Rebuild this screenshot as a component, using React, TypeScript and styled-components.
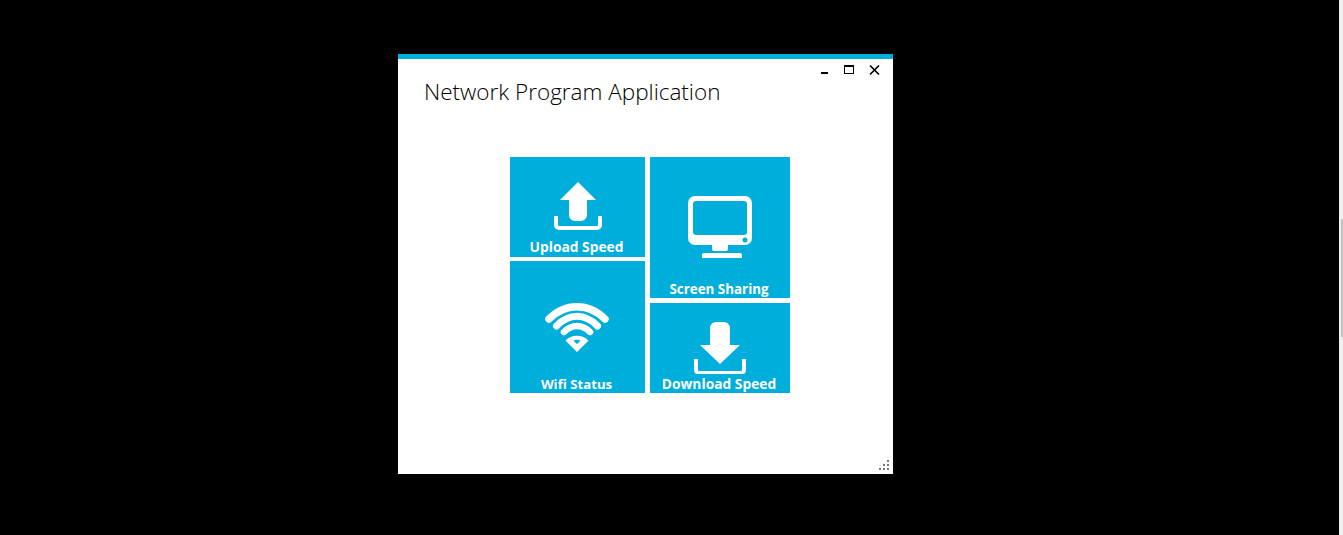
import React from "react";
import styled, { createGlobalStyle } from "styled-components";

const Global = createGlobalStyle`
  html, body { margin: 0; padding: 0; background: #000; }
  body { width: 1343px; height: 535px; overflow: hidden; }
`;

const Screen = styled.div`
  width: 1343px;
  height: 535px;
  background: #000;
  display: flex;
  padding: 54px 0 0 398px;
  box-sizing: border-box;
  position: relative;
`;

const Window = styled.div`
  width: 495px;
  height: 420px;
  background: #fff;
  border-top: 5px solid #00aedb;
  box-sizing: border-box;
  position: relative;
  display: flex;
  flex-direction: column;
  font-family: "Open Sans", "Noto Sans", sans-serif;
`;

const Controls = styled.div`
  position: absolute;
  top: 0;
  right: 6px;
  display: flex;
`;

const ControlButton = styled.div`
  width: 25px;
  height: 22px;
  display: flex;
  align-items: center;
  justify-content: center;
`;

const Title = styled.h1`
  margin: 17px 0 0 26px;
  font-family: "Open Sans", "Noto Sans", sans-serif;
  font-weight: 300;
  font-size: 22.5px;
  line-height: 32px;
  color: #000;
`;

const TileGrid = styled.div`
  margin: 49px 0 0 112px;
  display: grid;
  grid-template-columns: 135px 140px;
  column-gap: 5px;
`;

const Column = styled.div<{ $gap: number }>`
  display: flex;
  flex-direction: column;
  gap: ${(p) => p.$gap}px;
`;

const Tile = styled.div<{ $height: number }>`
  height: ${(p) => p.$height}px;
  background: #00aedb;
  display: flex;
  flex-direction: column;
  align-items: center;
  color: #fff;
`;

const IconSlot = styled.div<{ $top: number }>`
  margin-top: ${(p) => p.$top}px;
  display: flex;
  flex: 1;
  justify-content: center;
  align-items: flex-start;
`;

const TileLabel = styled.div<{ $lift?: number; $size?: number }>`
  font-size: ${(p) => p.$size ?? 13.8}px;
  font-weight: 700;
  line-height: 18px;
  height: 18px;
  margin-bottom: ${(p) => p.$lift ?? 0}px;
  padding-right: 2px;
  white-space: nowrap;
  font-family: "Open Sans", "Noto Sans", sans-serif;
`;

const Grip = styled.svg`
  position: absolute;
  right: 4px;
  bottom: 4px;
`;

const ScrollTrack = styled.div`
  position: absolute;
  right: 0;
  top: 0;
  width: 4px;
  height: 100%;
  background: #f1f1f1;
`;

const ScrollThumb = styled.div`
  position: absolute;
  right: 0;
  top: 219px;
  width: 2px;
  height: 118px;
  background: #c1c1c1;
`;

const UploadIcon = () => (
  <svg width="48" height="48" viewBox="0 0 48 48" fill="#fff">
    <path d="M24 0 L42 18 H33 V33 a6 6 0 0 1 -6 6 H21 a6 6 0 0 1 -6 -6 V18 H6 Z" />
    <path d="M2 34 V43 a3 3 0 0 0 3 3 H43 a3 3 0 0 0 3 -3 V34" fill="none" stroke="#fff" strokeWidth="4" />
  </svg>
);

const DownloadIcon = () => (
  <svg width="52" height="52" viewBox="0 0 52 52" fill="#fff">
    <path d="M16 6 a6 6 0 0 1 6 -6 H30 a6 6 0 0 1 6 6 V23 H46 L26 42 L6 23 H16 Z" />
    <path d="M2 37 V48 a3 3 0 0 0 3 3 H47 a3 3 0 0 0 3 -3 V37" fill="none" stroke="#fff" strokeWidth="4" />
  </svg>
);

const MonitorIcon = () => (
  <svg width="64" height="62" viewBox="0 0 64 62" fill="#fff">
    <path fillRule="evenodd" d="M7 0 H57 a7 7 0 0 1 7 7 V42 a7 7 0 0 1 -7 7 H7 a7 7 0 0 1 -7 -7 V7 a7 7 0 0 1 7 -7 Z M8 5 a3 3 0 0 0 -3 3 V36 a3 3 0 0 0 3 3 H56 a3 3 0 0 0 3 -3 V8 a3 3 0 0 0 -3 -3 Z" />
    <circle cx="57" cy="44" r="2.5" fill="#00aedb" />
    <path d="M24 48 H40 V53 a2 2 0 0 1 -2 2 H26 a2 2 0 0 1 -2 -2 Z" />
    <path d="M14 62 V59 a2 2 0 0 1 2 -2 H52 a2 2 0 0 1 2 2 V62 Z" />
  </svg>
);

const WifiIcon = () => (
  <svg width="66" height="50" viewBox="0 0 66 50" fill="none" stroke="#fff" strokeLinecap="round">
    <path d="M4 17 C20 0.5 44 0.5 60 17" strokeWidth="7.5" />
    <path d="M11.5 24 C24 11 40 11 52.5 24" strokeWidth="7" />
    <path d="M19 30 C27 22 37 22 45 30" strokeWidth="6.5" />
    <path
      d="M32 50 L20.5 38.5 C26 32 38 32 43.5 38.5 Z M32 42 L28.5 38.8 C30.5 37.5 33.5 37.5 35.5 38.8 Z"
      fill="#fff"
      stroke="none"
      fillRule="evenodd"
    />
  </svg>
);

export default function App() {
  return (
    <>
      <Global />
      <Screen>
        <Window>
          <Controls>
            <ControlButton>
              <svg width="8" height="8" viewBox="0 0 8 8"><rect x="0" y="6" width="7" height="2" fill="#000" /></svg>
            </ControlButton>
            <ControlButton>
              <svg width="11" height="10" viewBox="0 0 11 10"><rect x="0.5" y="0.5" width="9" height="8" fill="none" stroke="#000" /><rect x="0.5" y="0" width="9" height="2" fill="#000" /></svg>
            </ControlButton>
            <ControlButton>
              <svg width="11" height="10" viewBox="0 0 11 10"><path d="M1 0.5 L10 9.5 M10 0.5 L1 9.5" stroke="#000" strokeWidth="1.6" /></svg>
            </ControlButton>
          </Controls>
          <Title>Network Program Application</Title>
          <TileGrid>
            <Column $gap={4}>
              <Tile $height={100}>
                <IconSlot $top={25}><UploadIcon /></IconSlot>
                <TileLabel $lift={1}>Upload Speed</TileLabel>
              </Tile>
              <Tile $height={132}>
                <IconSlot $top={41}><WifiIcon /></IconSlot>
                <TileLabel $size={13.2}>Wifi Status</TileLabel>
              </Tile>
            </Column>
            <Column $gap={5}>
              <Tile $height={141}>
                <IconSlot $top={39}><MonitorIcon /></IconSlot>
                <TileLabel $size={13.4}>Screen Sharing</TileLabel>
              </Tile>
              <Tile $height={90}>
                <IconSlot $top={19}><DownloadIcon /></IconSlot>
                <TileLabel>Download Speed</TileLabel>
              </Tile>
            </Column>
          </TileGrid>
          <Grip width="10" height="10" viewBox="0 0 10 10" fill="#777">
            <rect x="8" y="0" width="2" height="2" />
            <rect x="4" y="4" width="2" height="2" />
            <rect x="8" y="4" width="2" height="2" />
            <rect x="0" y="8" width="2" height="2" />
            <rect x="4" y="8" width="2" height="2" />
            <rect x="8" y="8" width="2" height="2" />
          </Grip>
        </Window>
        <ScrollTrack />
        <ScrollThumb />
      </Screen>
    </>
  );
}
